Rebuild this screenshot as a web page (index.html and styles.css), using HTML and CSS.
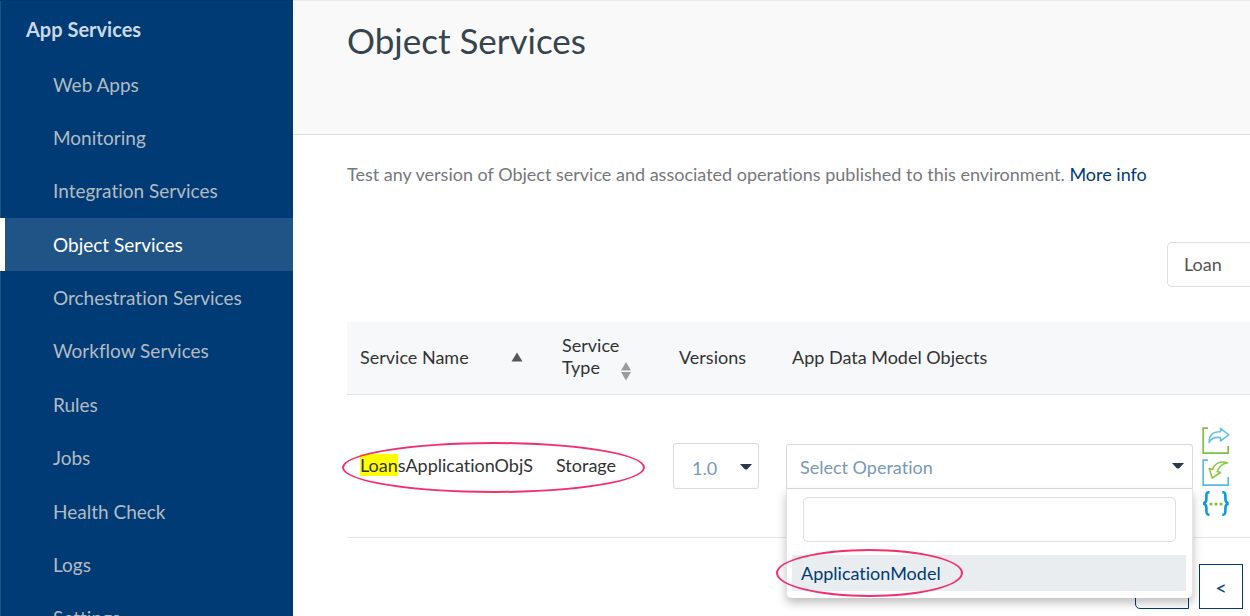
FILE: index.html
```html
<!DOCTYPE html>
<html lang="en">
<head>
<meta charset="utf-8">
<title>Object Services</title>
<link rel="stylesheet" href="styles.css">
</head>
<body>
<nav class="sidebar" aria-label="App Services">
  <h2 class="sidebar-title">App Services</h2>
  <ul class="menu">
    <li><a class="menu-link" href="#">Web Apps</a></li>
    <li><a class="menu-link" href="#">Monitoring</a></li>
    <li><a class="menu-link" href="#">Integration Services</a></li>
    <li><a class="menu-link menu-link-active" href="#" aria-current="page">Object Services</a></li>
    <li><a class="menu-link" href="#">Orchestration Services</a></li>
    <li><a class="menu-link" href="#">Workflow Services</a></li>
    <li><a class="menu-link" href="#">Rules</a></li>
    <li><a class="menu-link" href="#">Jobs</a></li>
    <li><a class="menu-link" href="#">Health Check</a></li>
    <li><a class="menu-link" href="#">Logs</a></li>
    <li><a class="menu-link" href="#">Settings</a></li>
  </ul>
</nav>
<main class="main">
  <header class="page-head"><h1 class="page-title">Object Services</h1></header>
  <section class="content">
    <p class="intro">Test any version of Object service and associated operations published to this environment. <a class="more" href="#">More info</a></p>
    <div class="toolbar"><input class="search" type="text" value="Loan" aria-label="Search services"></div>
    <table class="services">
      <colgroup><col class="col-name"><col class="col-type"><col class="col-version"><col><col class="col-actions"></colgroup>
      <thead>
        <tr>
          <th><div class="head-cell head-name">Service Name
            <svg class="sort-up" viewBox="0 0 12 10" aria-hidden="true"><path d="M6 0.5 11.5 9.5H0.5z" fill="#555759"/></svg></div></th>
          <th><div class="head-cell head-type"><span>Service<br>Type</span>
            <svg class="sort-both" viewBox="0 0 10 20" aria-hidden="true"><path d="M5 1 10 9.5H0zM0 11H10L5 19.5z" fill="#9b9b9b"/></svg></div></th>
          <th>Versions</th>
          <th>App Data Model Objects</th>
          <th aria-label="Actions"></th>
        </tr>
      </thead>
      <tbody>
        <tr>
          <td class="name"><mark>Loan</mark>sApplicationObjS<span class="ring ring-row"></span></td>
          <td class="type">Storage</td>
          <td>
            <div class="version-box">
              <select class="version" aria-label="Version"><option>1.0</option></select>
              <svg class="caret version-caret" viewBox="0 0 12 6" aria-hidden="true"><path d="M0 0H12L7.5 5Q6 6 4.5 5z" fill="#2b3944"/></svg>
            </div>
          </td>
          <td class="model">
            <div class="combo">
              <button class="combo-button" type="button" aria-expanded="true">Select Operation
                <svg class="caret" viewBox="0 0 12 6" aria-hidden="true"><path d="M0 0H12L7.5 5Q6 6 4.5 5z" fill="#2b3944"/></svg>
              </button>
              <div class="dropdown">
                <input class="filter" type="text" aria-label="Filter objects">
                <button class="choice" type="button">ApplicationModel<span class="ring ring-choice"></span></button>
              </div>
            </div>
          </td>
          <td class="actions">
            <div class="action-list">
              <button class="action" type="button" aria-label="Export"><svg viewBox="0 0 28 28" fill="none"><path d="M6 1.2H1.2V26.2H26.2V19" stroke="#7dc142" stroke-width="1.7"/><path d="M7.2 15.5C6.8 8 11 4.5 18.5 4.8V1.3L26.8 7.8 18.5 14V10.6C12.5 9.8 9 11.5 7.2 15.5Z" stroke="#68c1e6" stroke-width="1.6" stroke-linejoin="round"/></svg></button>
              <button class="action" type="button" aria-label="Import"><svg viewBox="0 0 28 28" fill="none"><path d="M6 1.2H1.2V26.2H26.2V18" stroke="#5bb9e2" stroke-width="1.7"/><path d="M25.5 3.8C17.5 1.5 12.5 5 10.5 10.5L7.2 9.5 10.2 19 18.5 13.5 15.2 12.4C16.8 8 20 4.8 25.5 3.8Z" stroke="#8bc94a" stroke-width="1.6" stroke-linejoin="round"/></svg></button>
              <button class="action" type="button" aria-label="Show JSON"><svg viewBox="0 0 28 28" fill="none"><path d="M7.5 1.2C4.5 1.2 4.4 2.5 4.4 5V8C4.4 10.5 4 12 1.2 12.5 4 13 4.4 14.5 4.4 17V20C4.4 22.5 4.5 23.8 7.5 23.8M20.3 1.2C23.3 1.2 23.4 2.5 23.4 5V8C23.4 10.5 23.8 12 26.6 12.5 23.8 13 23.4 14.5 23.4 17V20C23.4 22.5 23.3 23.8 20.3 23.8" stroke="#0a9bdb" stroke-width="2.6"/><g fill="#7dbf2d"><circle cx="9" cy="13" r="1.5"/><circle cx="14" cy="13" r="1.5"/><circle cx="19" cy="13" r="1.5"/></g></svg></button>
            </div>
          </td>
        </tr>
      </tbody>
    </table>
    <div class="pager">
      <button class="page-button page-first" type="button" aria-label="First page"></button>
      <button class="page-button" type="button" aria-label="Previous page">&lt;</button>
    </div>
  </section>
</main>
</body>
</html>
```
FILE: styles.css
```css
* { box-sizing: border-box; }
body {
  margin: 0;
  height: 100vh;
  display: flex;
  overflow: hidden;
  background: #fff;
  color: #333;
  font: 18px/22px Lato, "Open Sans", sans-serif;
  font-variant-ligatures: none;
}
button, input, select { font: inherit; font-variant-ligatures: none; color: inherit; }
button { cursor: pointer; }

.sidebar {
  flex: 0 0 293px;
  background: #003b75;
  border-top: 1px solid #00356a;
  overflow: hidden;
}
.sidebar-title {
  margin: 0;
  padding: 17px 25px 18px;
  border-left: 1px solid #1c5184;
  font-size: 20px;
  line-height: 22px;
  color: #ccd8e4;
}
.menu {
  margin: 0;
  padding: 0;
  list-style: none;
  display: grid;
  grid-auto-rows: 1fr;
  min-height: 587px;
}
.menu-link {
  display: flex;
  align-items: center;
  height: 100%;
  padding-left: 52px;
  border-left: 1px solid #1c5184;
  color: #b3bbc2;
  font-size: 19px;
  text-decoration: none;
}
.menu-link-active {
  padding-left: 48px;
  border-left: 5px solid #fff;
  background: #205487;
  color: #fff;
}

.main { flex: 1; min-width: 0; }
.page-head {
  padding: 17px 54px 71px;
  background: #f9f9f9;
  border-top: 1px solid #e6ebf0;
  border-bottom: 1px solid #dadcdd;
}
.page-title {
  margin: 0;
  font-size: 35px;
  line-height: 45px;
  font-weight: 400;
  color: #36444f;
}
.content { padding: 28px 0 0 54px; }
.intro { margin: 0; color: #75787b; white-space: nowrap; }
.more { color: #003b75; text-decoration: none; }
.toolbar { display: flex; justify-content: flex-end; margin: 57px 0 35px; }
.search {
  width: 83px;
  height: 45px;
  padding: 0 16px 2px;
  border: 1px solid #dcdddd;
  border-right: 0;
  border-radius: 5px 0 0 5px;
  background: #fff;
  color: #555;
}

.services { width: 100%; table-layout: fixed; border-collapse: separate; border-spacing: 0; }
.col-name { width: 202px; }
.col-type { width: 117px; }
.col-version { width: 113px; }
.col-actions { width: 57px; }
th {
  height: 73px;
  padding: 0 13px 2px;
  background: #f7f8fa;
  border-bottom: 1px solid #e2e4e6;
  font-weight: 400;
  text-align: left;
  white-space: nowrap;
}
td { height: 143px; padding: 0 7px; border-bottom: 1px solid #e4e4e4; }
.head-cell { display: flex; justify-content: space-between; }
.head-name { align-items: center; padding-right: 13px; }
.head-type { align-items: flex-end; padding: 0 22px 2px 0; }
.sort-up { width: 12px; height: 10px; }
.sort-both { width: 10px; height: 20px; margin-bottom: -3px; }
.name { position: relative; padding: 0 0 2px 13px; }
.type { padding-bottom: 2px; }
mark { background: #ff0; color: inherit; }
.ring {
  position: absolute;
  border: 2px solid #f3306d;
  border-radius: 50%;
  pointer-events: none;
}
.ring-row { left: -5px; top: 47px; width: 303px; height: 51px; }
.ring-choice { left: -16px; top: -6px; width: 187px; height: 48px; }

.version-box { position: relative; width: 86px; }
.version {
  display: block;
  width: 100%;
  height: 46px;
  padding: 3px 18px 0;
  appearance: none;
  border: 1px solid #d8dadc;
  border-radius: 3px;
  background: #fff;
  color: #7899b8;
}
.caret { width: 12px; height: 6px; flex: none; }
.version-caret { position: absolute; right: 7px; top: 21px; pointer-events: none; }
.model { padding: 1px 0 0 7px; }
.combo { position: relative; }
.combo-button {
  display: flex;
  align-items: center;
  justify-content: space-between;
  width: 100%;
  height: 45px;
  padding: 1px 8px 0 13px;
  border: 1px solid #d8dadc;
  border-radius: 3px 3px 0 0;
  background: #fff;
  color: #7899b8;
}
.combo-button .caret { margin-bottom: 3px; }
.dropdown {
  position: absolute;
  z-index: 2;
  top: 100%;
  left: 0;
  right: 0;
  padding: 8px 6px 7px 5px;
  border-left: 1px solid #e4e4e4;
  border-right: 1px solid #e4e4e4;
  border-radius: 0 0 5px 5px;
  background: #fff;
  box-shadow: 0 5px 10px rgba(0, 0, 0, .25);
}
.filter {
  display: block;
  width: calc(100% - 21px);
  height: 45px;
  margin: 0 10px 13px 11px;
  padding: 0 12px;
  border: 1px solid #dcdddd;
  border-radius: 5px;
}
.choice {
  position: relative;
  display: block;
  width: 100%;
  height: 36px;
  padding: 0 9px 1px;
  border: 0;
  background: #e9edf0;
  color: #003b75;
  text-align: left;
}
.actions { padding: 13px 0 0 9px; }
.action-list { display: flex; flex-direction: column; gap: 4px; }
.action { width: 28px; height: 28px; padding: 0; border: 0; background: none; }
.action svg { display: block; width: 28px; height: 28px; }

.pager { display: flex; justify-content: flex-end; gap: 10px; padding: 26px 7px 8px; }
.page-button {
  width: 44px;
  height: 45px;
  padding: 0;
  border: 1px solid #003b75;
  background: #fff;
  color: #003b75;
  font-size: 20px;
}
.page-first { width: 54px; border-radius: 5px 0 0 5px; }
```
